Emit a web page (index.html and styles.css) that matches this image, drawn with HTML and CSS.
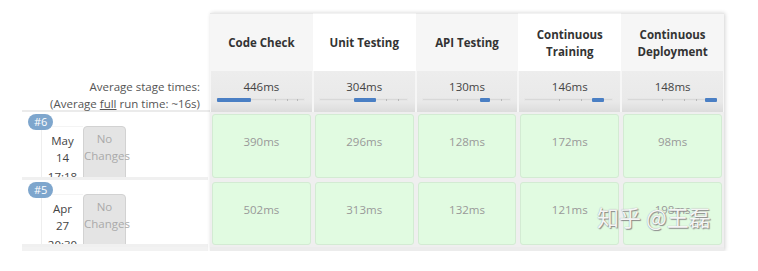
FILE: index.html
```html
<!DOCTYPE html>
<html lang="en">
<head>
    <meta charset="UTF-8">
    <title>Stage View</title>
    <link rel="stylesheet" href="styles.css">
</head>
<body>

    <div class="pipeline">
        <!-- header row -->
        <div class="corner"></div>
        <div class="stage-head shade">Code Check</div>
        <div class="stage-head">Unit Testing</div>
        <div class="stage-head shade">API Testing</div>
        <div class="stage-head">Continuous<br>Training</div>
        <div class="stage-head shade">Continuous<br>Deployment</div>

        <!-- averages -->
        <div class="avg-label">
            Average stage times:<br>
            (Average <u>full</u> run time: ~16s)
        </div>
        <div class="avg-cell">446ms
            <div class="bar"><span class="tick" style="left:58px"></span><span class="tick" style="left:70px"></span><span class="tick" style="left:80px"></span><span class="fill" style="left:0;width:34px"></span></div>
        </div>
        <div class="avg-cell">304ms
            <div class="bar"><span class="tick" style="left:66px"></span><span class="tick" style="left:78px"></span><span class="fill" style="left:34px;width:22px"></span></div>
        </div>
        <div class="avg-cell">130ms
            <div class="bar"><span class="tick" style="left:34px"></span><span class="tick" style="left:78px"></span><span class="fill" style="left:57px;width:10px"></span></div>
        </div>
        <div class="avg-cell">146ms
            <div class="bar"><span class="tick" style="left:34px"></span><span class="tick" style="left:56px"></span><span class="fill" style="left:67px;width:12px"></span></div>
        </div>
        <div class="avg-cell">148ms
            <div class="bar"><span class="tick" style="left:34px"></span><span class="tick" style="left:56px"></span><span class="tick" style="left:68px"></span><span class="fill" style="left:77px;width:12px"></span></div>
        </div>

        <!-- build #6 -->
        <div class="build">
            <span class="badge">#6</span>
            <div class="date">May<br>14<span class="time">17:18</span></div>
            <div class="changes">No<br>Changes</div>
        </div>
        <div class="stage-cell"><div class="ok">390ms</div></div>
        <div class="stage-cell"><div class="ok">296ms</div></div>
        <div class="stage-cell"><div class="ok">128ms</div></div>
        <div class="stage-cell"><div class="ok">172ms</div></div>
        <div class="stage-cell"><div class="ok">98ms</div></div>

        <!-- build #5 -->
        <div class="build">
            <span class="badge">#5</span>
            <div class="date">Apr<br>27<span class="time">20:30</span></div>
            <div class="changes">No<br>Changes</div>
        </div>
        <div class="stage-cell"><div class="ok">502ms</div></div>
        <div class="stage-cell"><div class="ok">313ms</div></div>
        <div class="stage-cell"><div class="ok">132ms</div></div>
        <div class="stage-cell"><div class="ok">121ms</div></div>
        <div class="stage-cell"><div class="ok">198ms</div></div>

        <!-- next row, cut off -->
        <div class="cut left"></div>
        <div class="cut"></div>
        <div class="cut"></div>
        <div class="cut"></div>
        <div class="cut"></div>
        <div class="cut"></div>
    </div>

    <div class="watermark">知乎 @王磊</div>

</body>
</html>
```

FILE: styles.css
```css
body {
    margin: 0;
    background-color: white;
    font-family: "Open Sans", "Noto Sans", "Noto Sans CJK SC", sans-serif;
    font-size: 11.5px;
    color: #333;
}

.pipeline {
    display: grid;
    grid-template-columns: 188px repeat(5, 102.8px);
    grid-template-rows: 58px 41px 68px 67px 4px;
    margin: 13px 0 0 22px;
    width: 702px;
    position: relative;
}

.pipeline::after {
    content: "";
    position: absolute;
    top: 0;
    bottom: 0;
    left: 188px;
    right: 0;
    box-shadow: 1px 0 4px rgba(0, 0, 0, 0.18);
    pointer-events: none;
}

.corner {
    background-color: white;
}

.stage-head {
    display: flex;
    align-items: center;
    justify-content: center;
    text-align: center;
    font-weight: bold;
    line-height: 17px;
    color: #333;
    background-color: white;
    border-top: 1px solid #f2f2f2;
}

.stage-head.shade {
    background-color: #f6f6f6;
    border-top: 1px solid #e8e8e8;
}

.avg-label {
    text-align: right;
    padding: 7px 10px 0 0;
    line-height: 17px;
    color: #555;
    border-bottom: 2px solid #ebebeb;
}

.avg-cell {
    position: relative;
    text-align: center;
    padding-top: 7px;
    line-height: 17px;
    color: #444;
    background: linear-gradient(#ededed, #e9e9e9 75%, #dcdcdc);
    border-left: 1px solid #f6f6f6;
    border-right: 1px solid #f6f6f6;
}

.bar {
    position: absolute;
    left: 5px;
    top: 27px;
    width: 89px;
    height: 3px;
    background-color: #d8d8d8;
    border: 1px solid #e6e6e6;
    box-sizing: border-box;
}

.bar .tick {
    position: absolute;
    top: 0;
    width: 1px;
    height: 2px;
    background-color: #b8b8b8;
}

.bar .fill {
    position: absolute;
    top: -1px;
    height: 4px;
    background-color: #4a7fc4;
    border-radius: 1px;
}

.build {
    position: relative;
    display: flex;
    align-items: flex-start;
    padding: 14px 0 0 19px;
    margin-right: 2px;
    background-color: white;
    border-bottom: 3px solid #f0f0f0;
    overflow: hidden;
}

.badge {
    position: absolute;
    top: 2px;
    left: 6px;
    padding: 1px 6px;
    border-radius: 8px;
    background-color: #7ea6cd;
    color: white;
    font-size: 11px;
    line-height: 14px;
    z-index: 1;
}

.date {
    width: 42px;
    height: 60px;
    padding-top: 5px;
    text-align: center;
    line-height: 17px;
    color: #444;
    border-left: 1px solid #eee;
    border-top: 1px solid #f4f4f4;
    box-sizing: border-box;
}

.date .time {
    display: block;
    margin-top: 2px;
}

.changes {
    width: 43px;
    height: 60px;
    padding-top: 3px;
    text-align: center;
    line-height: 17px;
    color: #aaa;
    background-color: #e4e4e4;
    border: 1px solid #d2d2d2;
    border-radius: 4px 4px 0 0;
    box-sizing: border-box;
}

.stage-cell {
    padding: 2px;
    background-color: #efefef;
}

.ok {
    height: 100%;
    box-sizing: border-box;
    padding-top: 18px;
    text-align: center;
    line-height: 17px;
    color: #999;
    background-color: #e1fbe1;
    border: 1px solid #d3ebd3;
    border-radius: 3px;
}

.cut {
    background-color: #ececec;
}

.cut.left {
    background-color: #f2f2f2;
    margin-right: 2px;
}

.watermark {
    position: absolute;
    left: 597px;
    top: 199px;
    font-family: "Noto Sans CJK SC", sans-serif;
    font-size: 22px;
    line-height: 34px;
    color: rgba(255, 255, 255, 0.92);
    text-shadow: 1px 1px 1px #888, 0 0 1px #999;
}
```
